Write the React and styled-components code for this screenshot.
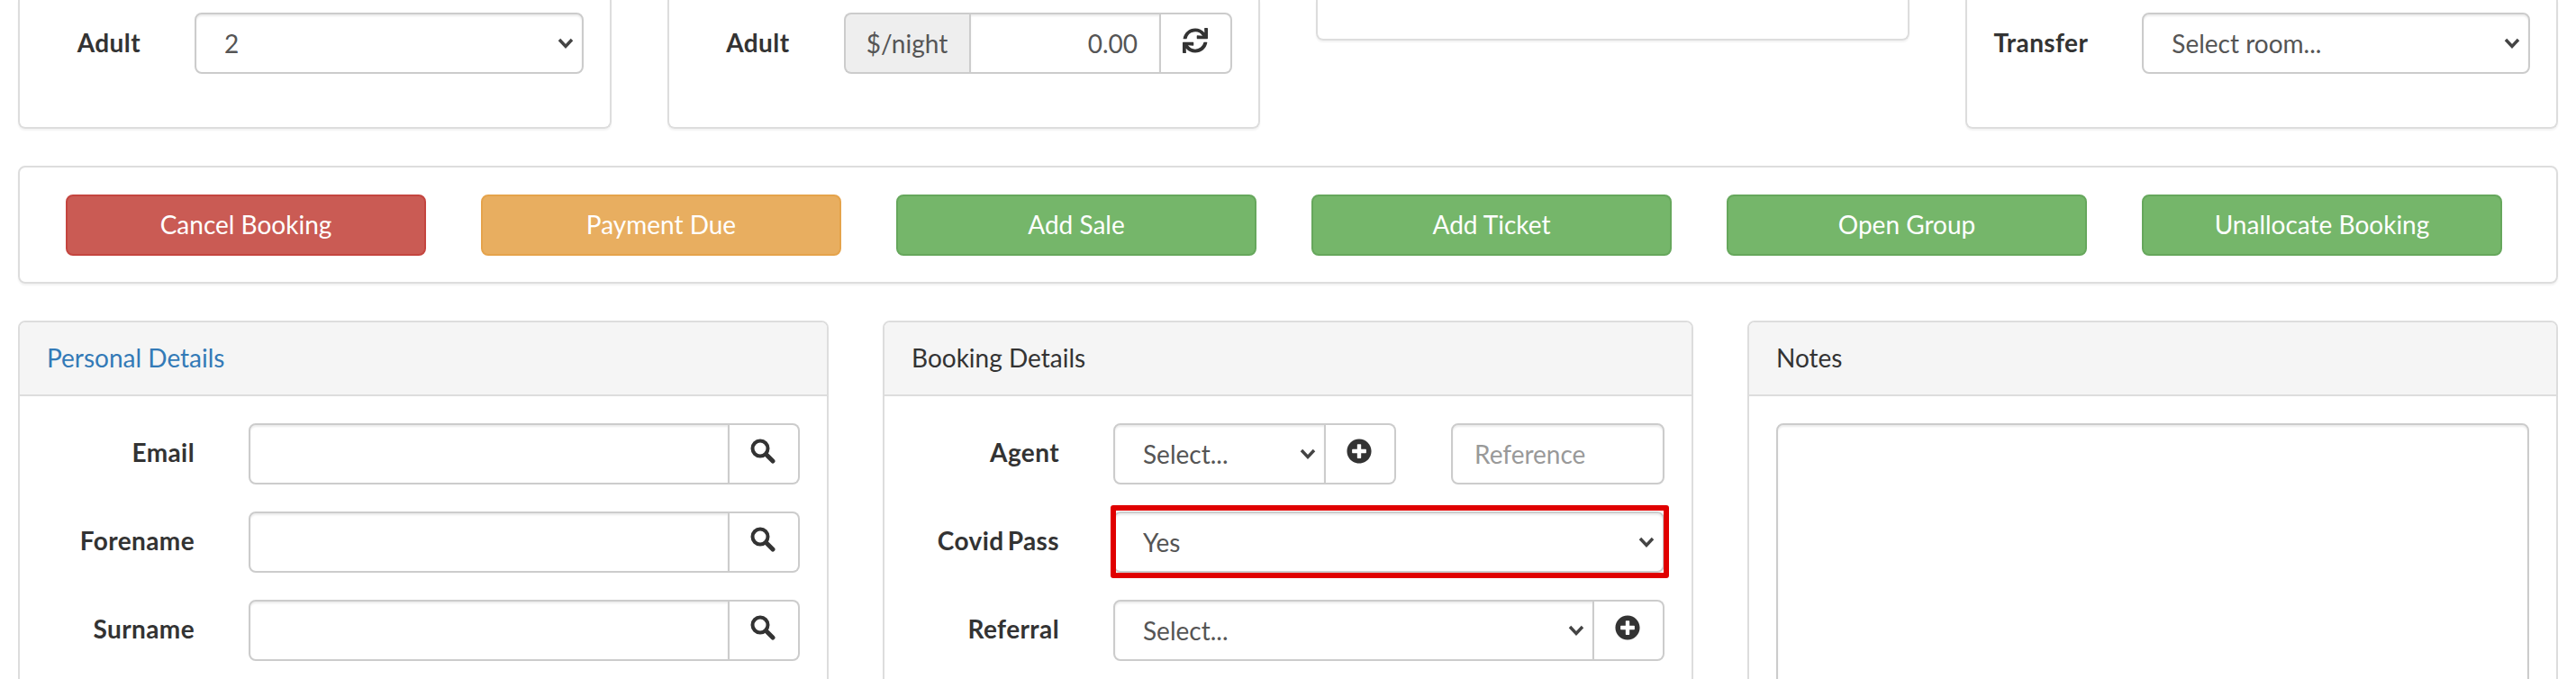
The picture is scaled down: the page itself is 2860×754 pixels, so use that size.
import React from "react"
import styled, { createGlobalStyle } from "styled-components"
import { FaPlusCircle, FaSync } from "react-icons/fa"

const GlobalStyle = createGlobalStyle`
  html, body {
    margin: 0;
    padding: 0;
    background: #fff;
  }
  * {
    box-sizing: border-box;
  }
  body {
    font-family: Lato, "Liberation Sans", sans-serif;
    font-size: 28px;
    color: #333;
  }
`

const chevron = `url("data:image/svg+xml,%3Csvg xmlns='http://www.w3.org/2000/svg' width='18' height='12' viewBox='0 0 18 12'%3E%3Cpath d='M2 2l7 7.5L16 2' fill='none' stroke='%23444' stroke-width='3.4'/%3E%3C/svg%3E")`

const Page = styled.div`
  width: 2860px;
  height: 754px;
  overflow: hidden;
  padding: 0 20px;
`

const TopRow = styled.div`
  display: grid;
  grid-template-columns: repeat(4, 658.5px);
  column-gap: 62px;
  align-items: start;
  height: 184px;
`

const TopCard = styled.div`
  height: ${(p) => (p.$short ? "45px" : "143px")};
  border: 2px solid #ddd;
  border-top: none;
  border-radius: 0 0 8px 8px;
  box-shadow: 0 2px 2px rgba(0, 0, 0, 0.05);
  padding: 14px 29px 0 30px;
  display: flex;
  align-items: flex-start;
  gap: 60px;
`

const TopLabel = styled.label`
  flex: 0 0 104px;
  height: 68px;
  line-height: 66px;
  font-weight: 700;
  letter-spacing: 0.4px;
  text-align: right;
  white-space: nowrap;
`

const Control = styled.div`
  flex: 1;
  display: flex;
  height: 68px;
  min-width: 0;
`

const Select = styled.select`
  appearance: none;
  display: block;
  flex: 1;
  width: 100%;
  min-width: 0;
  height: 68px;
  padding: 0 30px 0 31px;
  font: 28px Lato, "Liberation Sans", sans-serif;
  color: #555;
  background: #fff ${chevron} no-repeat right 9px center;
  border: 2px solid #ccc;
  border-radius: ${(p) => (p.$joined ? "8px 0 0 8px" : "8px")};
  box-shadow: inset 0 2px 2px rgba(0, 0, 0, 0.075);
`

const Input = styled.input`
  display: block;
  flex: 1;
  width: 100%;
  min-width: 0;
  height: 68px;
  padding: 0 24px;
  font: 28px Lato, "Liberation Sans", sans-serif;
  color: #555;
  text-align: ${(p) => (p.$right ? "right" : "left")};
  background: #fff;
  border: 2px solid #ccc;
  border-radius: ${(p) => (p.$joined ? "8px 0 0 8px" : p.$middle ? "0" : "8px")};
  box-shadow: inset 0 2px 2px rgba(0, 0, 0, 0.075);
  &::placeholder {
    color: #999;
    opacity: 1;
  }
`

const ReferenceInput = styled(Input)`
  flex: 0 0 237px;
  margin-left: 61px;
`

const PrefixAddon = styled.span`
  flex: 0 0 139px;
  display: flex;
  align-items: center;
  justify-content: center;
  color: #555;
  background: #eee;
  border: 2px solid #ccc;
  border-right: none;
  border-radius: 8px 0 0 8px;
`

const IconButton = styled.button`
  flex: 0 0 ${(p) => p.$width}px;
  display: flex;
  align-items: center;
  justify-content: center;
  padding: 0 2px 6px 0;
  margin: 0;
  color: #333;
  background: #fff;
  border: 2px solid #ccc;
  border-left: none;
  border-radius: 0 8px 8px 0;
  font-size: 28px;
`

const ActionBar = styled.div`
  height: 131px;
  border: 2px solid #ddd;
  border-radius: 8px;
  box-shadow: 0 2px 2px rgba(0, 0, 0, 0.05);
  padding: 30px 60px 0 51px;
  display: grid;
  grid-template-columns: repeat(6, 1fr);
  column-gap: 61px;
  align-items: start;
`

const tones = {
  red: ["#ca5b54", "#c4453f"],
  orange: ["#e8ae60", "#e5a34b"],
  green: ["#75b66a", "#66a75c"],
}

const ActionButton = styled.button`
  height: 68px;
  font: 28px Lato, "Liberation Sans", sans-serif;
  color: #fff;
  background: ${(p) => tones[p.$tone][0]};
  border: 2px solid ${(p) => tones[p.$tone][1]};
  border-radius: 8px;
  padding: 0 0 2px;
`

const Panels = styled.div`
  display: grid;
  grid-template-columns: repeat(3, 900px);
  column-gap: 60px;
  margin-top: 41px;
`

const Panel = styled.section`
  height: 500px;
  border: 2px solid #ddd;
  border-radius: 8px 8px 0 0;
`

const PanelHeading = styled.div`
  height: 82px;
  padding: 0 30px;
  line-height: 78px;
  background: #f5f5f5;
  border-bottom: 2px solid #ddd;
  border-radius: 6px 6px 0 0;
  color: ${(p) => (p.$link ? "#337ab7" : "#333")};
`

const PanelBody = styled.div`
  padding: 30px 30px 0;
  display: flex;
  flex-direction: column;
  gap: 30px;
`

const FormRow = styled.div`
  display: flex;
  gap: 60px;
`

const RowLabel = styled.label`
  flex: 0 0 164px;
  height: 68px;
  line-height: 65px;
  font-weight: 700;
  letter-spacing: 0.4px;
  word-spacing: -3px;
  text-align: right;
  white-space: nowrap;
`

// red box drawn over the field, it covers the select's own border
const Highlight = styled.div`
  flex: 1;
  display: flex;
  margin: -7px -5px -6px -3px;
  padding: 7px 5px 6px 3px;
  border-radius: 3px;
  outline: 6px solid #e00000;
  outline-offset: -6px;
  position: relative;
  z-index: 1;
`

const Notes = styled.textarea`
  display: block;
  width: 100%;
  height: 400px;
  border: 2px solid #ccc;
  border-radius: 8px;
  box-shadow: inset 0 2px 2px rgba(0, 0, 0, 0.075);
  resize: none;
`

function SearchIcon() {
  return (
    <svg width="28" height="28" viewBox="0 0 28 28" fill="none" stroke="currentColor">
      <circle cx="11" cy="11" r="8.5" strokeWidth="4" />
      <line x1="17.5" y1="17.5" x2="25" y2="25" strokeWidth="5" strokeLinecap="round" />
    </svg>
  )
}

function SearchField({ label }) {
  return (
    <FormRow>
      <RowLabel>{label}</RowLabel>
      <Control>
        <Input $joined />
        <IconButton $width={78}><SearchIcon /></IconButton>
      </Control>
    </FormRow>
  )
}

export default function App() {
  return (
    <>
      <GlobalStyle />
      <Page>
        <TopRow>
          <TopCard>
            <TopLabel>Adult</TopLabel>
            <Control>
              <Select defaultValue="2"><option>2</option></Select>
            </Control>
          </TopCard>
          <TopCard>
            <TopLabel>Adult</TopLabel>
            <Control>
              <PrefixAddon>$/night</PrefixAddon>
              <Input $middle $right defaultValue="0.00" />
              <IconButton $width={79}><FaSync /></IconButton>
            </Control>
          </TopCard>
          <TopCard $short />
          <TopCard>
            <TopLabel>Transfer</TopLabel>
            <Control>
              <Select><option>Select room...</option></Select>
            </Control>
          </TopCard>
        </TopRow>

        <ActionBar>
          <ActionButton $tone="red">Cancel Booking</ActionButton>
          <ActionButton $tone="orange">Payment Due</ActionButton>
          <ActionButton $tone="green">Add Sale</ActionButton>
          <ActionButton $tone="green">Add Ticket</ActionButton>
          <ActionButton $tone="green">Open Group</ActionButton>
          <ActionButton $tone="green">Unallocate Booking</ActionButton>
        </ActionBar>

        <Panels>
          <Panel>
            <PanelHeading $link>Personal Details</PanelHeading>
            <PanelBody>
              <SearchField label="Email" />
              <SearchField label="Forename" />
              <SearchField label="Surname" />
            </PanelBody>
          </Panel>

          <Panel>
            <PanelHeading>Booking Details</PanelHeading>
            <PanelBody>
              <FormRow>
                <RowLabel>Agent</RowLabel>
                <Control>
                  <Select $joined><option>Select...</option></Select>
                  <IconButton $width={78}><FaPlusCircle /></IconButton>
                  <ReferenceInput placeholder="Reference" />
                </Control>
              </FormRow>
              <FormRow>
                <RowLabel>Covid Pass</RowLabel>
                <Highlight>
                  <Select><option>Yes</option></Select>
                </Highlight>
              </FormRow>
              <FormRow>
                <RowLabel>Referral</RowLabel>
                <Control>
                  <Select $joined><option>Select...</option></Select>
                  <IconButton $width={78}><FaPlusCircle /></IconButton>
                </Control>
              </FormRow>
            </PanelBody>
          </Panel>

          <Panel>
            <PanelHeading>Notes</PanelHeading>
            <PanelBody>
              <Notes />
            </PanelBody>
          </Panel>
        </Panels>
      </Page>
    </>
  )
}
